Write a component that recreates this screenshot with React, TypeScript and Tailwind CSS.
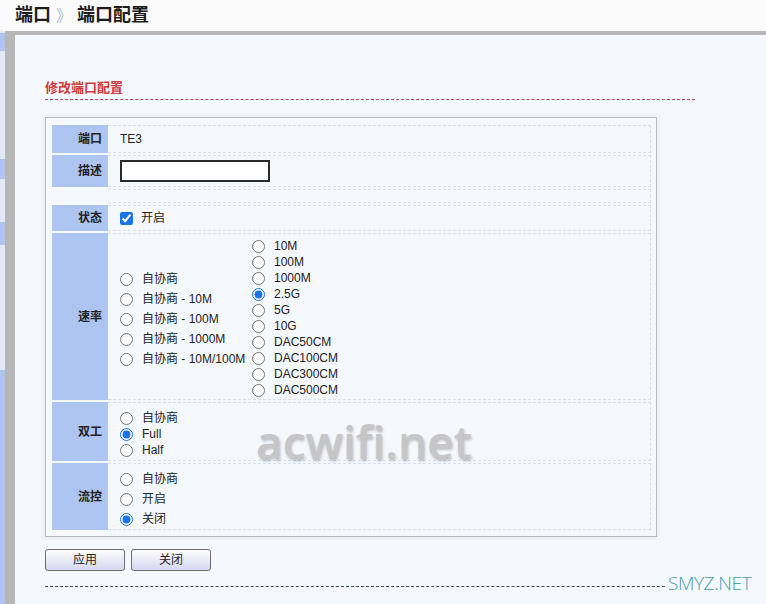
import React from "react"

const leftSpeeds = ["自协商", "自协商 - 10M", "自协商 - 100M", "自协商 - 1000M", "自协商 - 10M/100M"]
const rightSpeeds = ["10M", "100M", "1000M", "2.5G", "5G", "10G", "DAC50CM", "DAC100CM", "DAC300CM", "DAC500CM"]

const Radio = ({ name, label, checked, h }: { name: string; label: string; checked?: boolean; h: string }) => (
  <label className={`flex items-center gap-[9px] ${h}`}>
    <input type="radio" name={name} defaultChecked={checked} className="w-[13px] h-[13px] shrink-0 accent-[#1a73e8]" />
    <span className="whitespace-nowrap">{label}</span>
  </label>
)

const Row = ({ label, h, children, cls = "items-center" }: { label: string; h: string; children?: React.ReactNode; cls?: string }) => (
  <div className={`flex ${h}`}>
    <div className="w-[56px] bg-[#aec4f1] flex items-center justify-end pr-[6px] font-bold">{label}</div>
    <div className={`flex-1 flex pl-[12px] border-y border-r border-dashed border-[#d9e0ec] ${cls}`}>{children}</div>
  </div>
)

const App = () => {
  return (
    <div className="relative w-[766px] h-[604px] overflow-hidden bg-[#f5f8fd] text-[12px] text-[#222] font-['Liberation_Sans','Noto_Sans_CJK_SC',sans-serif]">
      <div className="h-[31px] bg-[#fbfbfb] flex items-center pl-[15px] text-[18px] font-bold text-[#1c1c1c]">
        <span>端口</span>
        <span className="ml-[5px] mr-[5px] text-[16px] font-normal text-[#a9b9cd]">》</span>
        <span>端口配置</span>
      </div>
      <div className="flex h-[573px]">
        <div className="w-[5px] flex flex-col bg-[#e2eaf8]">
          <div className="h-[2px]" />
          <div className="h-[18px] bg-[#aec4f1]" />
          <div className="h-[108px]" />
          <div className="h-[20px] bg-[#aec4f1]" />
          <div className="h-[43px]" />
          <div className="h-[23px] bg-[#aec4f1]" />
          <div className="h-[125px]" />
          <div className="flex-1 bg-[#aec4f1]" />
        </div>
        <div className="flex-1 border-t-4 border-l-[10px] border-[#b7b7b7] pl-[30px] pt-[44px]">
          <div className="w-[650px] h-[21px] border-b border-dashed border-[#b04a4a] text-[13px] font-bold leading-[18px] text-[#d2393c]">
            修改端口配置
          </div>
          <div className="mt-[17px] w-[612px] border border-[#b9b9b9] pt-[7px] pl-[6px] pr-[5px] pb-[6px] shadow-[0_0_0_3px_#eef2f9]">
            <div className="flex flex-col gap-[2px]">
              <Row label="端口" h="h-[28px]">TE3</Row>
              <Row label="描述" h="h-[32px]">
                <div className="w-[150px] h-[22px] border-2 border-[#2b2b2b] bg-white" />
              </Row>
              <div className="flex h-[14px]">
                <div className="w-[56px]" />
                <div className="flex-1 border-y border-r border-dashed border-[#d9e0ec]" />
              </div>
              <Row label="状态" h="h-[26px]">
                <label className="flex items-center gap-[8px]">
                  <input type="checkbox" defaultChecked className="w-[13px] h-[13px] accent-[#1a73e8]" />
                  <span>开启</span>
                </label>
              </Row>
              <Row label="速率" h="h-[167px]" cls="items-start pt-[4px]">
                <div className="w-[132px] mt-[31px] flex flex-col">
                  {leftSpeeds.map((s) => (
                    <Radio key={s} name="speed" label={s} h="h-[20px]" />
                  ))}
                </div>
                <div className="flex flex-col">
                  {rightSpeeds.map((s) => (
                    <Radio key={s} name="speed" label={s} checked={s === "2.5G"} h="h-[16px] gap-[8px]" />
                  ))}
                </div>
              </Row>
              <Row label="双工" h="h-[59px]" cls="items-start pt-[7px]">
                <div className="flex flex-col">
                  <Radio name="duplex" label="自协商" h="h-[16px]" />
                  <Radio name="duplex" label="Full" checked h="h-[16px]" />
                  <Radio name="duplex" label="Half" h="h-[16px]" />
                </div>
              </Row>
              <Row label="流控" h="h-[67px]" cls="items-start pt-[5px]">
                <div className="flex flex-col">
                  <Radio name="flow" label="自协商" h="h-[20px]" />
                  <Radio name="flow" label="开启" h="h-[20px]" />
                  <Radio name="flow" label="关闭" checked h="h-[20px]" />
                </div>
              </Row>
            </div>
          </div>
          <div className="mt-[12px] flex gap-[6px]">
            <button className="w-[80px] h-[22px] rounded-[3px] border border-[#6e6e6e] bg-gradient-to-b from-white to-[#d6d6f0] text-[12px]">
              应用
            </button>
            <button className="w-[80px] h-[22px] rounded-[3px] border border-[#6e6e6e] bg-gradient-to-b from-white to-[#d6d6f0] text-[12px]">
              关闭
            </button>
          </div>
          <div className="mt-[15px] w-[650px] border-b border-dashed border-[#3c4d5c]" />
        </div>
      </div>
      <div className="absolute left-[256px] top-[417px] text-[46px] leading-[48px] font-semibold text-[#c6c6c8] font-['Open_Sans',sans-serif] [text-shadow:1px_2px_3px_rgba(0,0,0,0.25)] pointer-events-none">
        acwifi.net
      </div>
      <div className="absolute left-[667px] top-[570px] px-[1px] bg-[#f5f8fd] text-[19px] leading-[26px] tracking-[-0.4px] font-light text-[#4a9fa9] font-['Open_Sans',sans-serif]">
        SMYZ.NET
      </div>
    </div>
  )
}

export default App
